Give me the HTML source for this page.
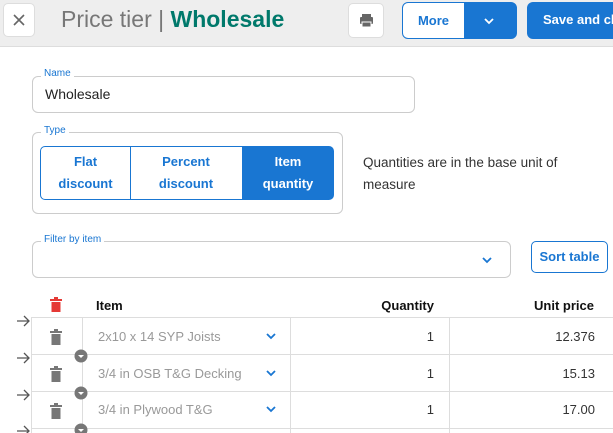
<!DOCTYPE html><html><head><style>
body{margin:0;width:613px;height:433px;overflow:hidden;background:#fff;font-family:"Liberation Sans",sans-serif;position:relative}
.a{position:absolute}
.hdr{left:0;top:0;width:613px;height:46px;background:#eee;border-bottom:1px solid #ddd}
.btnw{background:#fff;border:1px solid #ddd;border-radius:5px}
.lbl{font-size:10px;color:#1976d2;background:#fff;padding:0 3px}
.fld{border:1px solid #ccc;border-radius:6px}
.seg{top:146px;height:54px;border:1px solid #1976d2;color:#1976d2;font-size:13px;font-weight:bold;text-align:center;line-height:22px;box-sizing:border-box;padding-top:4px}
.hl{height:1px;background:#ddd;left:31px;width:582px}
.vl{width:1px;background:#ddd;top:317px;height:116px}
.t{font-size:13px;color:#999}
.n{font-size:13px;color:#333;text-align:right}
</style></head><body>
<div class="a hdr"></div>
<div class="a btnw" style="left:3px;top:3px;width:30px;height:32px"><svg width="30" height="32"><path d="M10 11l10 10M20 11l-10 10" stroke="#666" stroke-width="1.6"/></svg></div>
<div class="a" style="left:61px;top:6px;font-size:23px;color:#777">Price tier | <b style="color:#00796b">Wholesale</b></div>
<div class="a btnw" style="left:348px;top:3px;width:34px;height:33px"><svg width="34" height="33"><rect x="11" y="13" width="13" height="7" rx="1" fill="#666"/><rect x="13" y="10" width="9" height="3" fill="#666"/><rect x="13" y="18" width="9" height="5" fill="#666" stroke="#fff" stroke-width="1"/></svg></div>
<div class="a" style="left:402px;top:2px;width:113px;height:35px;border:1px solid #1976d2;border-radius:6px;overflow:hidden;background:#1976d2">
<div class="a" style="left:0;top:0;width:61px;height:35px;background:#fff;color:#1976d2;font-size:13px;font-weight:bold;line-height:35px;text-align:center">More</div>
<svg class="a" style="left:80px;top:13px" width="12" height="10"><path d="M2 3l4 4 4-4" stroke="#fff" stroke-width="1.8" fill="none"/></svg></div>
<div class="a" style="left:527px;top:2px;width:100px;height:37px;background:#1976d2;border-radius:6px;color:#fff;font-size:13px;font-weight:bold;line-height:36px;padding-left:16px">Save and close</div>

<div class="a fld" style="left:32px;top:76px;width:381px;height:35px"></div>
<div class="a lbl" style="left:41px;top:68px">Name</div>
<div class="a" style="left:45px;top:86px;font-size:14px;color:#222">Wholesale</div>

<div class="a fld" style="left:32px;top:132px;width:309px;height:80px"></div>
<div class="a lbl" style="left:41px;top:125px">Type</div>
<div class="a seg" style="left:40px;width:91px;border-radius:5px 0 0 5px">Flat<br>discount</div>
<div class="a seg" style="left:130px;width:113px;border-left:none">Percent<br>discount</div>
<div class="a seg" style="left:242px;width:92px;background:#1976d2;color:#fff;border-radius:0 5px 5px 0">Item<br>quantity</div>
<div class="a" style="left:363px;top:152px;font-size:13.5px;color:#333;line-height:22px;width:240px">Quantities are in the base unit of measure</div>

<div class="a fld" style="left:32px;top:241px;width:477px;height:35px"></div>
<div class="a lbl" style="left:41px;top:234px">Filter by item</div>
<svg class="a" style="left:481px;top:255px" width="12" height="10"><path d="M2 3l4 4 4-4" stroke="#1976d2" stroke-width="1.8" fill="none"/></svg>
<div class="a" style="left:531px;top:241px;width:75px;height:30px;border:1px solid #1976d2;border-radius:5px;color:#1976d2;font-size:13px;font-weight:bold;line-height:30px;text-align:center">Sort table</div>

<svg class="a" style="left:50px;top:297px" width="12" height="16"><rect x="0" y="2" width="12" height="2" fill="#e53935"/><rect x="4" y="0" width="4" height="2" fill="#e53935"/><rect x="1.5" y="5" width="9" height="10" fill="#e53935"/></svg>
<div class="a" style="left:96px;top:298px;font-size:13px;font-weight:bold;color:#111">Item</div>
<div class="a" style="left:300px;top:298px;width:134px;text-align:right;font-size:13px;font-weight:bold;color:#111">Quantity</div>
<div class="a" style="left:460px;top:298px;width:134px;text-align:right;font-size:13px;font-weight:bold;color:#111">Unit price</div>

<div class="a hl" style="top:317px"></div><div class="a hl" style="top:354px"></div><div class="a hl" style="top:391px"></div><div class="a hl" style="top:428px"></div>
<div class="a vl" style="left:31px"></div><div class="a vl" style="left:82px"></div><div class="a vl" style="left:290px"></div><div class="a vl" style="left:449px"></div>

<svg class="a" style="left:0;top:300px" width="100" height="133">
<g stroke="#555" stroke-width="1.3" fill="none"><path d="M17 21h12M24 16l5 5-5 5"/><path d="M17 58h12M24 53l5 5-5 5"/><path d="M17 95h12M24 90l5 5-5 5"/><path d="M17 131h12M24 126l5 5-5 5"/></g>
<g fill="#777"><rect x="50" y="31" width="12" height="2"/><rect x="54" y="29" width="4" height="2"/><rect x="51.5" y="34" width="9" height="11"/>
<rect x="50" y="68" width="12" height="2"/><rect x="54" y="66" width="4" height="2"/><rect x="51.5" y="71" width="9" height="11"/>
<rect x="50" y="105" width="12" height="2"/><rect x="54" y="103" width="4" height="2"/><rect x="51.5" y="108" width="9" height="11"/>
<circle cx="81" cy="56" r="6.5"/><circle cx="81" cy="93" r="6.5"/><circle cx="81" cy="130" r="6.5"/></g>
<g fill="#fff"><path d="M78 55h6l-3 3z"/><path d="M78 92h6l-3 3z"/><path d="M78 129h6l-3 3z"/></g></svg>

<div class="a t" style="left:98px;top:329px">2x10 x 14 SYP Joists</div>
<div class="a t" style="left:98px;top:366px">3/4 in OSB T&amp;G Decking</div>
<div class="a t" style="left:98px;top:402px">3/4 in Plywood T&amp;G</div>
<svg class="a" style="left:265px;top:331px" width="12" height="90"><g stroke="#1976d2" stroke-width="1.8" fill="none"><path d="M2 3l4 4 4-4"/><path d="M2 40l4 4 4-4"/><path d="M2 76l4 4 4-4"/></g></svg>
<div class="a n" style="left:340px;top:329px;width:94px">1</div>
<div class="a n" style="left:340px;top:366px;width:94px">1</div>
<div class="a n" style="left:340px;top:402px;width:94px">1</div>
<div class="a n" style="left:490px;top:329px;width:105px">12.376</div>
<div class="a n" style="left:490px;top:366px;width:105px">15.13</div>
<div class="a n" style="left:490px;top:402px;width:105px">17.00</div>
</body></html>
